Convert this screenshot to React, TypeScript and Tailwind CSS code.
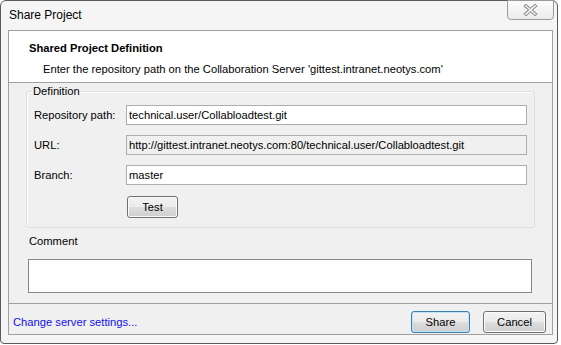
import React from "react";

const field =
  "h-[20px] flex-1 border border-[#abadb3] px-[2px] text-[11.2px] leading-[18px] text-black outline-none";

function Btn({ label, width, primary }: { label: string; width: string; primary?: boolean }) {
  return (
    <button
      type="button"
      className={`${width} h-[22px] rounded-[3px] border ${primary ? "border-[#3c7fb1] shadow-[inset_0_0_0_1px_#bfe4f9]" : "border-[#707070] shadow-[inset_0_0_0_1px_#fbfbfb]"} bg-[linear-gradient(#f2f2f2_0%,#ebebeb_50%,#dddddd_51%,#cfcfcf_100%)] text-[11.2px] leading-[18px] text-black`}
    >
      {label}
    </button>
  );
}

function Row({ label, value, disabled }: { label: string; value: string; disabled?: boolean }) {
  return (
    <div className="flex items-center">
      <span className="w-[92px] leading-[16px]">{label}</span>
      <input
        readOnly
        value={value}
        className={`${field} ${disabled ? "bg-[#f0f0f0] text-[#222]" : "bg-white"}`}
      />
    </div>
  );
}

export default function App() {
  return (
    <div className="h-[345px] w-[561px] bg-white font-['Liberation_Sans',Arial,sans-serif] text-[11.2px] text-black">
      <div className="relative flex h-[344px] w-[558px] flex-col rounded-t-[6px] rounded-b-[4px] border border-[#5a5a5a] bg-[#f5f5f5]">
        {/* title bar */}
        <div className="flex h-[29px] items-center pl-[8px] text-[12px] leading-[16px]">
          <span className="-mt-[1px]">Share Project</span>
        </div>
        <div className="absolute right-[3px] top-[-1px] flex h-[20px] w-[47px] items-center justify-center rounded-b-[4px] border border-[#9a9a9a] bg-[linear-gradient(#fbfbfb,#ececec)]">
          <svg width="15" height="12" viewBox="0 0 15 12">
            <path d="M3 2 L12 10 M12 2 L3 10" stroke="#8c8c8c" strokeWidth="3.6" strokeLinecap="square" />
            <path d="M3 2 L12 10 M12 2 L3 10" stroke="#f4f4f4" strokeWidth="1.6" strokeLinecap="square" />
          </svg>
        </div>

        {/* client area */}
        <div className="ml-[7px] flex w-[545px] flex-col border border-[#a0a0a0] bg-[#f0f0f0]">
          <div className="h-[52px] border-b border-[#a0a0a0] bg-white pl-[20px] pt-[9px]">
            <div className="font-bold leading-[16px]">Shared Project Definition</div>
            <div className="mt-[5px] pl-[14px] leading-[16px]">
              Enter the repository path on the Collaboration Server 'gittest.intranet.neotys.com'
            </div>
          </div>

          <div className="px-[17px] pt-[8px]">
            <div className="relative flex h-[137px] w-[509px] flex-col gap-[10px] rounded-[3px] border border-[#d5dfe5] pl-[7px] pr-[7px] pt-[13px] shadow-[inset_1px_1px_0_#ffffff]">
              <span className="absolute left-[5px] top-[-9px] bg-[#f0f0f0] px-[1px] leading-[16px]">Definition</span>
              <Row label="Repository path:" value="technical.user/Collabloadtest.git" />
              <Row label="URL:" value="http://gittest.intranet.neotys.com:80/technical.user/Collabloadtest.git" disabled />
              <Row label="Branch:" value="master" />
              <div className="ml-[93px] mt-[1px]">
                <Btn label="Test" width="w-[51px]" />
              </div>
            </div>

            <div className="mt-[5px] pl-[3px] leading-[16px]">Comment</div>
            <textarea className="ml-[2px] mt-[10px] block h-[34px] w-[504px] resize-none border border-[#828790] bg-white outline-none" />
          </div>

          <div className="mt-[10px] flex h-[31px] items-start justify-between border-t border-[#a0a0a0] pl-[4px] pr-[6px] pt-[7px]">
            <a className="mt-[3px] leading-[16px] text-[#1010f0]">Change server settings...</a>
            <div className="flex gap-[13px]">
              <Btn label="Share" width="w-[59px]" primary />
              <Btn label="Cancel" width="w-[63px]" />
            </div>
          </div>
        </div>
      </div>
    </div>
  );
}
